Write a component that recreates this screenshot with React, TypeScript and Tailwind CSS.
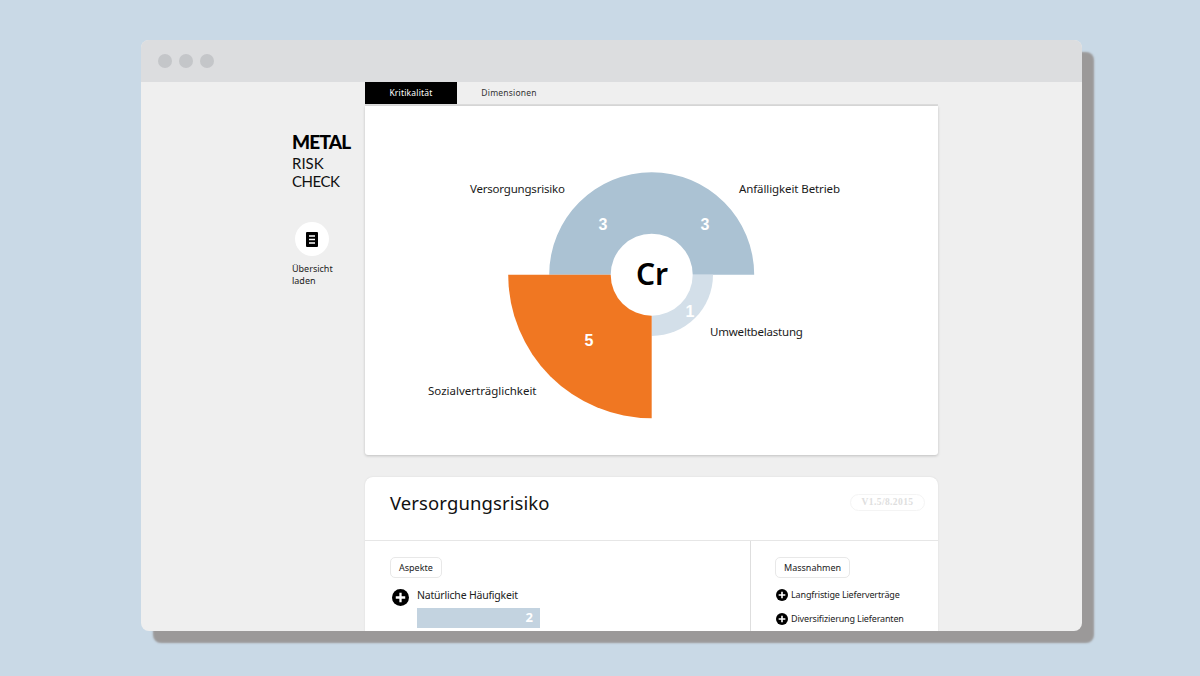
const sans = "font-['Noto_Sans','Liberation_Sans',sans-serif]";

function PlusIcon({ size }: { size: string }) {
  return (
    <svg className={`${size} shrink-0`} viewBox="0 0 18 18">
      <circle cx="9" cy="9" r="9" fill="#000" />
      <path d="M9 4v10M4 9h10" stroke="#fff" strokeWidth="2.4" />
    </svg>
  );
}

function Pill({ label }: { label: string }) {
  return (
    <span className="flex h-[21px] w-fit items-center rounded-[5px] border border-[#e8e8e8] bg-white px-2 text-[9px] text-[#222]">
      {label}
    </span>
  );
}

function Chart() {
  const label = "fill-[#1a1a1a] text-[11.5px]";
  const value = "fill-white font-['Liberation_Sans',sans-serif] text-[16px] font-bold";
  return (
    <svg className="h-[349px] w-full" viewBox="0 0 573 349">
      <path d="M184.2 168.7A102.5 102.5 0 0 1 389.2 168.7Z" fill="#abc2d3" />
      <path d="M286.7 168.7L348 168.7A61.3 61.3 0 0 1 286.7 230Z" fill="#d3dfe9" />
      <path d="M286.7 168.7L286.7 312.2A143.5 143.5 0 0 1 143.2 168.7Z" fill="#f07722" />
      <circle cx="286.7" cy="168.7" r="41" fill="#fff" />
      <text x="287" y="179" textAnchor="middle" className="fill-black text-[30px] font-semibold">Cr</text>
      <text x="238" y="124" textAnchor="middle" className={value}>3</text>
      <text x="340" y="124" textAnchor="middle" className={value}>3</text>
      <text x="224" y="240" textAnchor="middle" className={value}>5</text>
      <text x="325" y="211" textAnchor="middle" className={value}>1</text>
      <text x="105" y="87" className={`${label} tracking-[-0.2px]`}>Versorgungsrisiko</text>
      <text x="374" y="87" className={`${label} tracking-[-0.1px]`}>Anfälligkeit Betrieb</text>
      <text x="345" y="230" className={`${label} tracking-[-0.2px]`}>Umweltbelastung</text>
      <text x="63" y="289" className={label}>Sozialverträglichkeit</text>
    </svg>
  );
}

export default function App() {
  return (
    <div className={`h-[676px] w-[1200px] overflow-hidden bg-[#c9d9e6] pl-[141px] pt-[40px] ${sans}`}>
      <div className="flex h-[591px] w-[941px] flex-col overflow-hidden rounded-lg bg-[#efefef] shadow-[12px_12px_2px_#9b9999]">
        <div className="flex h-[42px] shrink-0 items-center gap-[7px] bg-[#dcdddf] pl-[17px]">
          <span className="size-[14px] rounded-full bg-[#c4c6c9]" />
          <span className="size-[14px] rounded-full bg-[#c4c6c9]" />
          <span className="size-[14px] rounded-full bg-[#c4c6c9]" />
        </div>

        <div className="flex min-h-0 flex-1">
          <aside className="w-[224px] shrink-0 pl-[151px] pt-[48px] font-['Lato',sans-serif]">
            <div className="text-[19px] font-black leading-[24px] tracking-[-0.8px] text-black">METAL</div>
            <div className="text-[15px] leading-[18px] text-[#111]">RISK</div>
            <div className="text-[15px] leading-[18px] tracking-[-0.5px] text-[#111]">CHECK</div>
            <div className="ml-[3px] mt-[32px] flex size-[34px] items-center justify-center rounded-full bg-white">
              <svg className="h-[15px] w-[12px]" viewBox="0 0 12 15">
                <rect width="12" height="15" rx="1" fill="#000" />
                <path d="M3 4h6M3 7.5h6M3 11h6" stroke="#fff" strokeWidth="1.6" />
              </svg>
            </div>
            <div className={`mt-[7px] text-[9px] leading-[12px] text-[#222] ${sans}`}>
              Übersicht
              <br />
              laden
            </div>
          </aside>

          <main className="w-[573px] shrink-0">
            <div className="flex h-[24px] border-b-2 border-[#dcdcdc] text-[8.5px] tracking-[0.2px]">
              <div className="flex w-[92px] items-center justify-center bg-black text-white">Kritikalität</div>
              <div className="flex w-[104px] items-center justify-center text-[#333]">Dimensionen</div>
            </div>
            <section className="rounded-b-[3px] bg-white shadow-[0_1px_3px_rgba(0,0,0,0.2)]">
              <Chart />
            </section>

            <section className="mt-[22px] rounded-t-lg bg-white shadow-[0_0_2px_rgba(0,0,0,0.1)]">
              <header className="flex h-[64px] items-start justify-between border-b border-[#e6e6e6] pl-[25px] pr-[13px]">
                <h1 className="mt-[12px] text-[18.5px] font-normal tracking-[0.1px] text-[#111]">Versorgungsrisiko</h1>
                <span className="mt-[17px] flex h-[17px] w-[75px] items-center justify-center rounded-full border border-[#f4f4f4] font-['Liberation_Serif',serif] text-[9.5px] font-bold tracking-[0.4px] text-[#dedede]">
                  V1.5/8.2015
                </span>
              </header>
              <div className="flex h-[140px]">
                <div className="w-[386px] border-r border-[#dedede] pl-[25px] pt-[16px]">
                  <Pill label="Aspekte" />
                  <div className="mt-[10px] flex items-start gap-[8px] pl-[2px]">
                    <PlusIcon size="mt-px size-[17px]" />
                    <div className="w-[123px]">
                      <div className="text-[10.5px] leading-[14px] tracking-[-0.2px] text-[#222]">Natürliche Häufigkeit</div>
                      <div className="mt-[6px] flex h-[20px] items-center justify-end bg-[#c3d3e0] pr-[7px] text-[13px] font-bold text-white">2</div>
                    </div>
                  </div>
                </div>
                <div className="pl-[24px] pt-[16px]">
                  <Pill label="Massnahmen" />
                  <div className="mt-[10px] flex flex-col gap-[10px] text-[9px] leading-[14px] tracking-[-0.15px] text-[#222]">
                    <div className="flex items-center gap-[3px] pl-px">
                      <PlusIcon size="size-[12px]" />
                      Langfristige Lieferverträge
                    </div>
                    <div className="flex items-center gap-[3px] pl-px">
                      <PlusIcon size="size-[12px]" />
                      Diversifizierung Lieferanten
                    </div>
                  </div>
                </div>
              </div>
            </section>
          </main>
        </div>
      </div>
    </div>
  );
}
